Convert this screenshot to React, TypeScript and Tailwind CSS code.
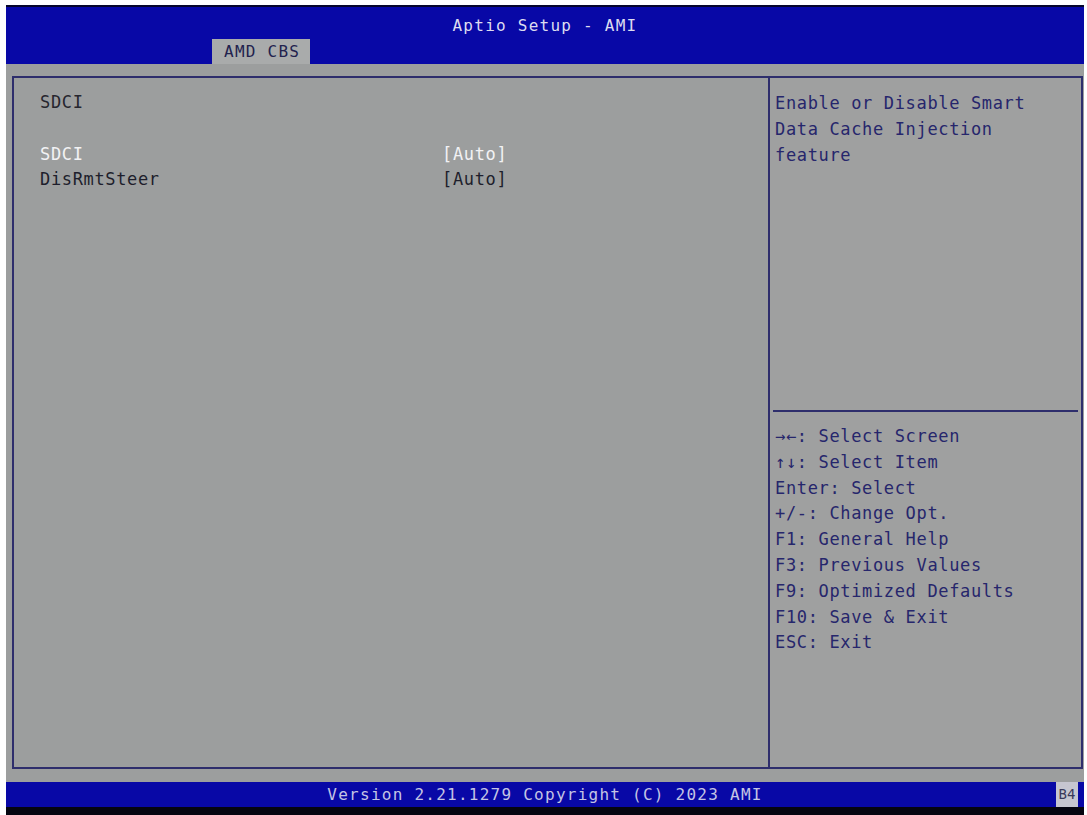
const items = [
  { label: "SDCI", value: "[Auto]", selected: true },
  { label: "DisRmtSteer", value: "[Auto]", selected: false },
];

const keys = [
  "→←: Select Screen",
  "↑↓: Select Item",
  "Enter: Select",
  "+/-: Change Opt.",
  "F1: General Help",
  "F3: Previous Values",
  "F9: Optimized Defaults",
  "F10: Save & Exit",
  "ESC: Exit",
];

const mono = "font-['DejaVu_Sans_Mono',_'Liberation_Mono',_monospace]";

export default function App() {
  return (
    <div
      className={`flex h-[815px] w-[1087px] flex-col bg-white pl-[6px] pr-[3px] pt-[5px] ${mono}`}
    >
      {/* header */}
      <header className="flex h-[59px] flex-col border-t-2 border-[#06062c] bg-[#0808a6]">
        <div className="h-[32px] pt-[9px] text-center text-[16px] leading-[20px] tracking-[1.25px] text-[#dcdcf0]">
          Aptio Setup - AMI
        </div>
        <div className="ml-[206px] flex h-[25px] w-[98px] items-center bg-[#a9abab] pl-[12px] text-[16px] tracking-[1.25px] text-[#22224e]">
          AMD CBS
        </div>
      </header>

      {/* body */}
      <main className="flex flex-1 bg-[#9c9e9e] pb-[13px] pl-[6px] pr-px pt-[12px]">
        <div className="flex flex-1 border-2 border-[#2e2e6c]">
          <section className="w-[754px] pl-[26px] pt-[12px] text-[17px] leading-[25.8px] tracking-[0.65px]">
            <div className="text-[#26262e]">SDCI</div>
            <div className="h-[25.8px]" />
            {items.map((item) => (
              <div
                key={item.label}
                className={`grid grid-cols-[402px_1fr] ${
                  item.selected ? "text-[#f2f2f4]" : "text-[#1e1e2c]"
                }`}
              >
                <span>{item.label}</span>
                <span>{item.value}</span>
              </div>
            ))}
          </section>

          <aside className="flex flex-1 flex-col border-l-2 border-[#2e2e6c] bg-[#9fa0a0] text-[17px] leading-[25.8px] tracking-[0.65px] text-[#26266c]">
            <div className="h-[332px] pl-[5px] pt-[13px]">
              <div>Enable or Disable Smart</div>
              <div>Data Cache Injection</div>
              <div>feature</div>
            </div>
            <div className="mx-[3px] border-t-2 border-[#2e2e6c]" />
            <div className="pl-[5px] pt-[12px]">
              {keys.map((k) => (
                <div key={k}>{k}</div>
              ))}
            </div>
          </aside>
        </div>
      </main>

      {/* footer */}
      <footer className="grid h-[25px] grid-cols-[28px_1fr_28px] items-center bg-[#0808a6] text-[16px] tracking-[1.25px] text-[#c4c4e4]">
        <span />
        <span className="text-center">Version 2.21.1279 Copyright (C) 2023 AMI</span>
        <span className="flex h-full w-[22px] items-center justify-center bg-[#c6c6d0] text-[14px] tracking-normal text-[#3a3a5a]">
          B4
        </span>
      </footer>
      <div className="h-[8px] bg-[#050510]" />
    </div>
  );
}
